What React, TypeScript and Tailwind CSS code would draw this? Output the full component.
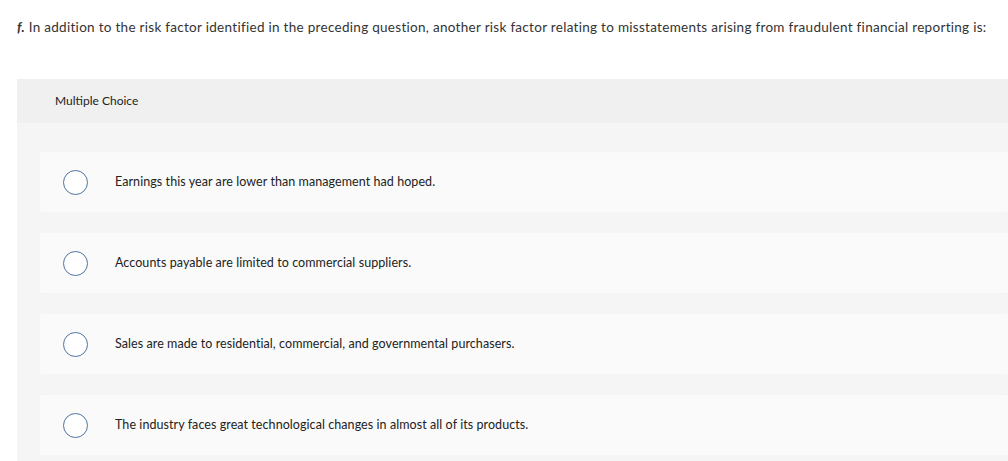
const OPTIONS = [
  "Earnings this year are lower than management had hoped.",
  "Accounts payable are limited to commercial suppliers.",
  "Sales are made to residential, commercial, and governmental purchasers.",
  "The industry faces great technological changes in almost all of its products.",
];

export default function App() {
  return (
    <div className="min-h-[461px] bg-white pl-[17px] font-['Lato','Liberation_Sans',sans-serif] text-[#333]">
      {/* Question */}
      <p className="pt-[18px] text-[13.5px] leading-[18px] tracking-[0.29px]">
        <strong className="italic font-bold">f.</strong> In addition to the risk factor identified in the preceding question, another risk factor relating to misstatements arising from fraudulent financial reporting is:
      </p>

      {/* Multiple choice panel */}
      <div className="mt-[43px] w-[991px]">
        <div className="flex h-[44px] items-center bg-[#f0f0f0] pl-[38px] text-[12px] text-[#222]">
          Multiple Choice
        </div>
        <div className="flex flex-col gap-[21px] bg-[#f5f5f5] pl-[23px] pt-[29px] pb-[8px]">
          {OPTIONS.map((opt) => (
            <Option key={opt} label={opt} />
          ))}
        </div>
      </div>
    </div>
  );
}

function Option({ label }: { label: string }) {
  return (
    <div className="flex h-[60px] items-center rounded-[3px] bg-[#fafafa] pl-[23px]">
      <span className="h-[25px] w-[25px] shrink-0 rounded-full border-[1.5px] border-[#4f73a0] bg-white" />
      <span className="ml-[27px] text-[12.5px] tracking-[0.07px] text-[#222]">{label}</span>
    </div>
  );
}
